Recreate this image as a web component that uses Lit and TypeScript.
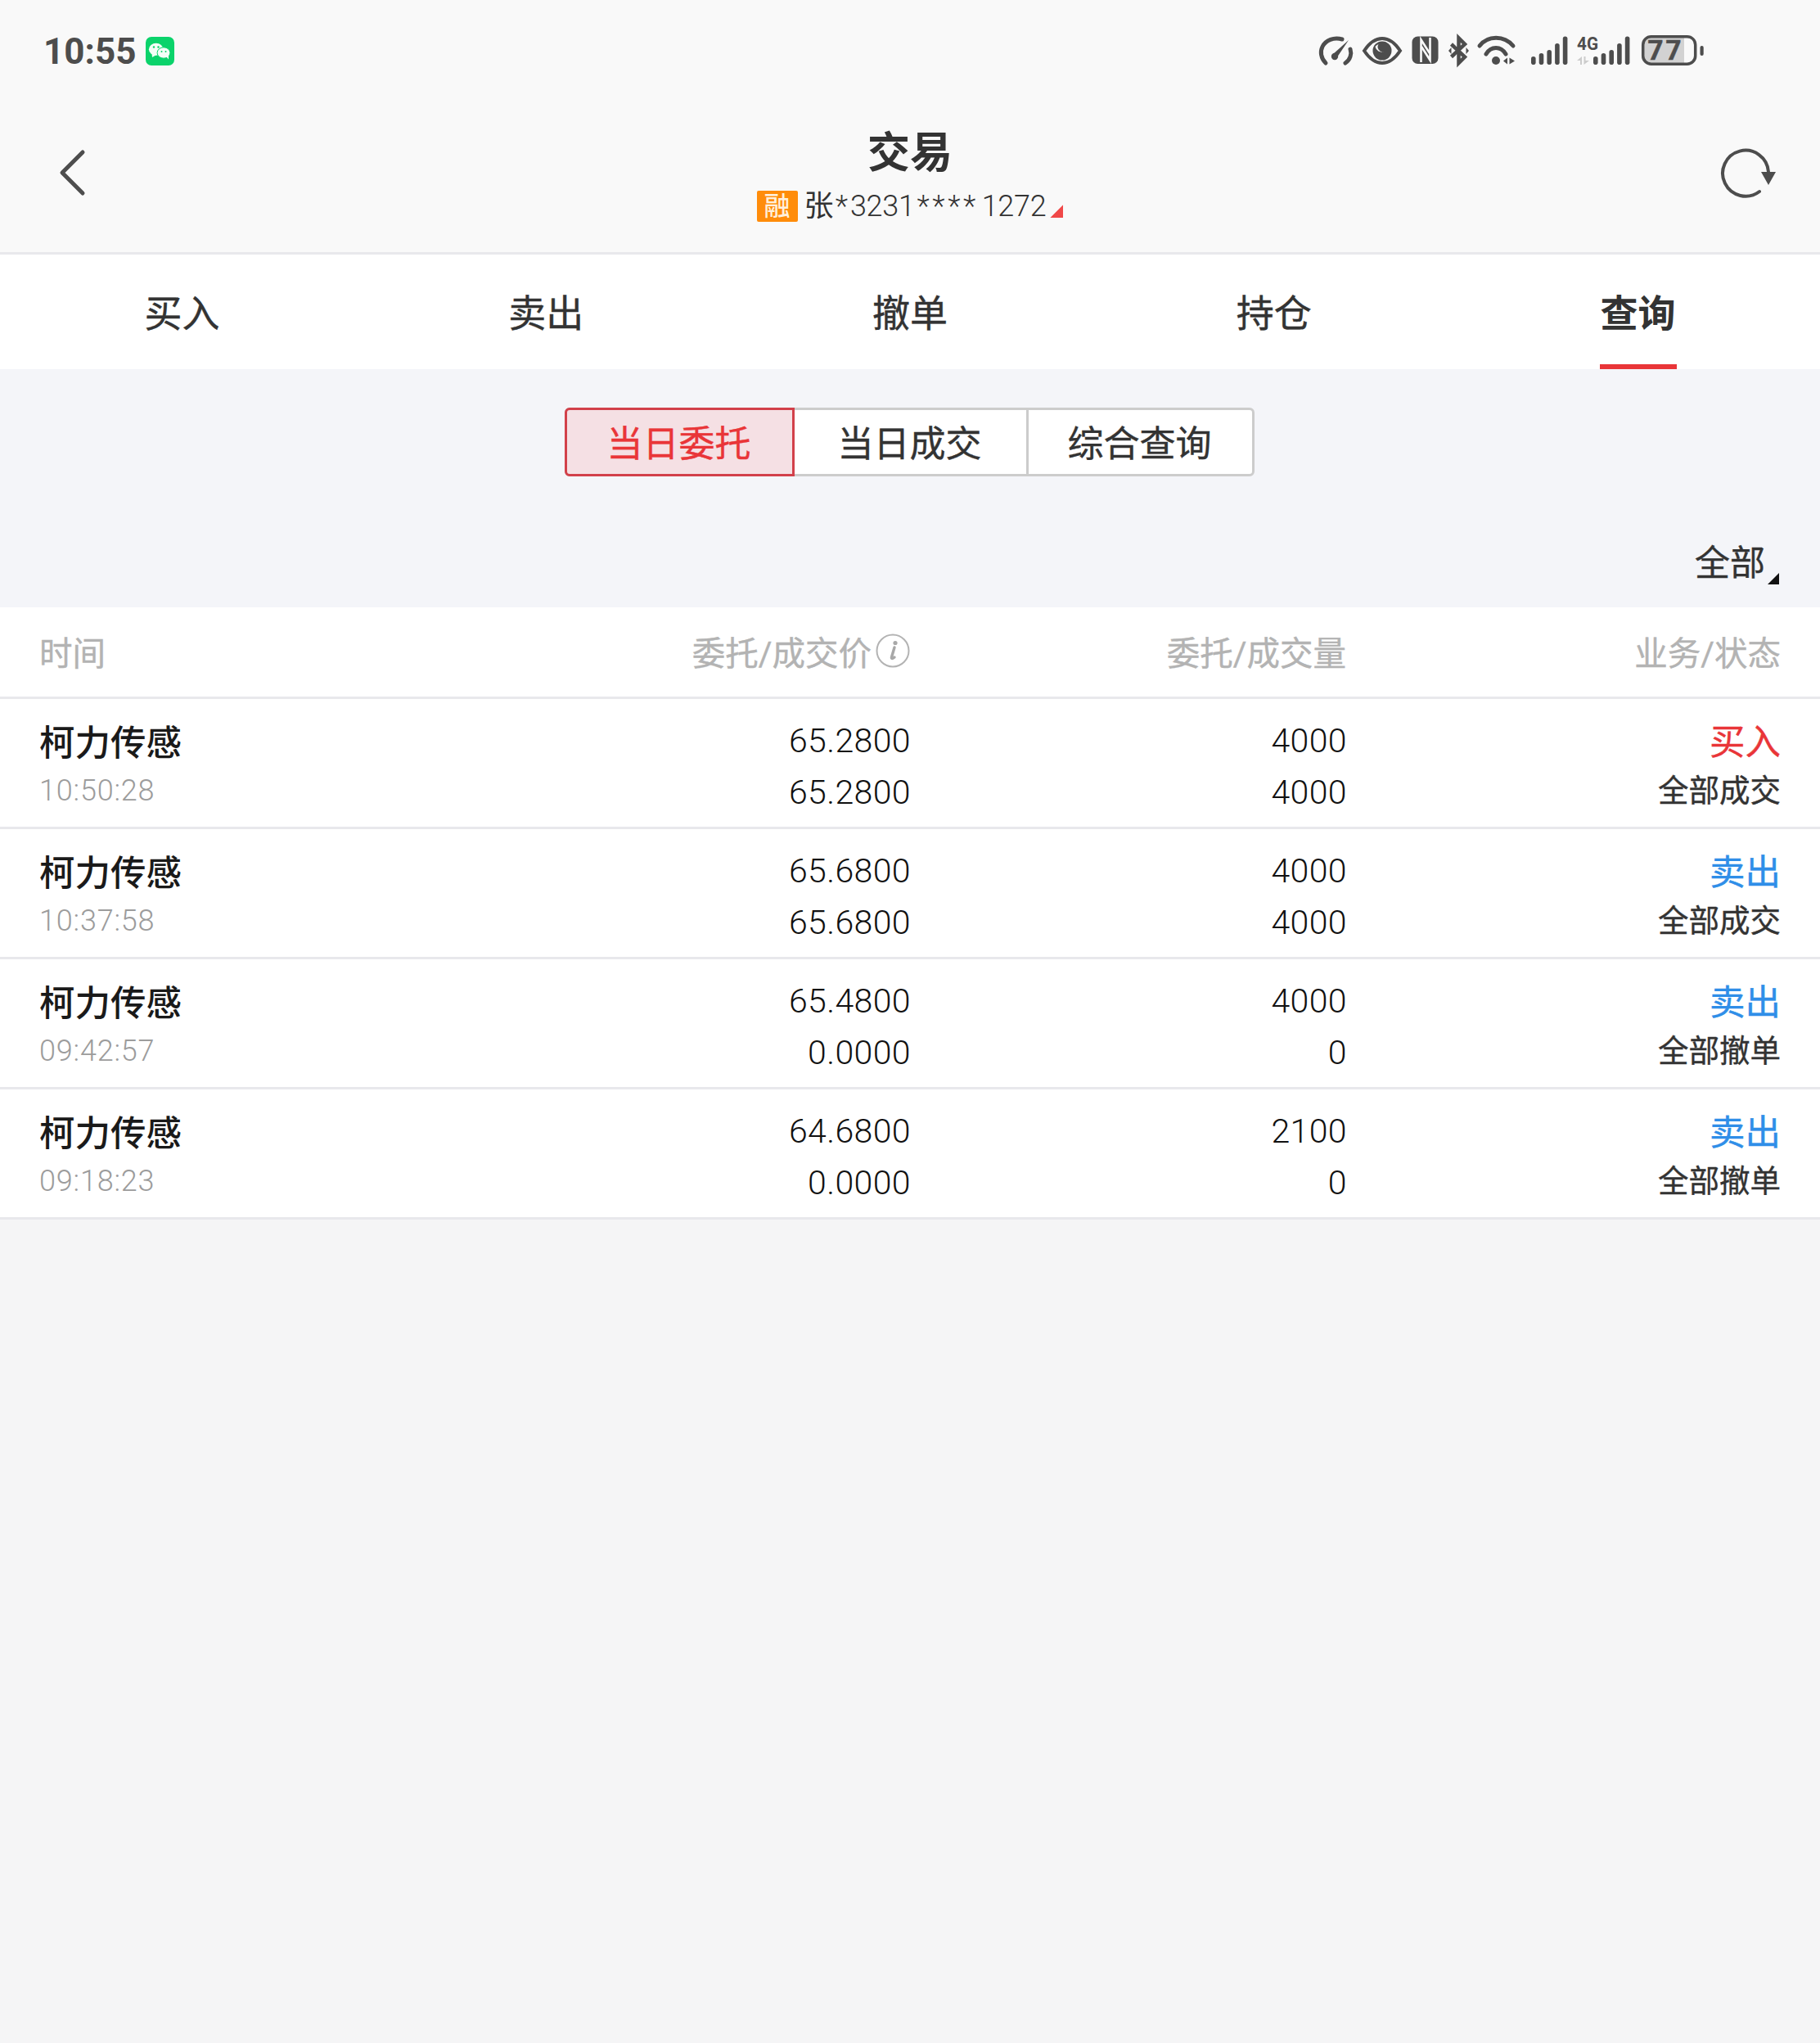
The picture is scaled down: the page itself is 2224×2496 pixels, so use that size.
import {LitElement, html, css} from 'lit';
import {customElement} from 'lit/decorators.js';
import {classMap} from 'lit/directives/class-map.js';

const rows = [
  {time: '10:50:28', price: '65.2800', dealPrice: '65.2800', qty: '4000', dealQty: '4000', side: '买入', status: '全部成交'},
  {time: '10:37:58', price: '65.6800', dealPrice: '65.6800', qty: '4000', dealQty: '4000', side: '卖出', status: '全部成交'},
  {time: '09:42:57', price: '65.4800', dealPrice: '0.0000', qty: '4000', dealQty: '0', side: '卖出', status: '全部撤单'},
  {time: '09:18:23', price: '64.6800', dealPrice: '0.0000', qty: '2100', dealQty: '0', side: '卖出', status: '全部撤单'},
];

const tabs = ['买入', '卖出', '撤单', '持仓', '查询'];
const segments = ['当日委托', '当日成交', '综合查询'];

@customElement('app-root')
export class AppRoot extends LitElement {
  static styles = css`
    :host {
      display: block;
      min-height: 2496px;
      background: #f5f5f6;
      font-family: "Roboto", "Noto Sans CJK SC", sans-serif;
      color: #333;
    }
    .top {
      background: #f9f9f9;
      border-bottom: 3px solid #e8e8ec;
    }
    .status {
      height: 126px;
      display: flex;
      align-items: center;
      justify-content: space-between;
      padding: 0 142px 0 53px;
      box-sizing: border-box;
    }
    .status-left {
      display: flex;
      align-items: center;
      gap: 12px;
    }
    .status-left svg {
      margin-top: -2px;
    }
    .clock {
      font-size: 44px;
      font-weight: 700;
      color: #4d4d4d;
    }
    .status-icons {
      display: flex;
      align-items: center;
      color: #4d4d4d;
    }
    .status-icons svg {
      display: block;
      overflow: visible;
    }
    .ml-10 { margin-left: 10px; }
    .ml-12 { margin-left: 12px; }
    .ml-14 { margin-left: 14px; }
    .ml-20 { margin-left: 20px; }
    .nav {
      height: 182px;
      box-sizing: border-box;
      display: grid;
      grid-template-columns: 1fr auto 1fr;
      align-items: center;
      padding: 0 52px 12px;
    }
    .back {
      margin-left: 18px;
    }
    .refresh {
      justify-self: end;
    }
    .nav svg {
      display: block;
    }
    .title-block {
      align-self: start;
      display: flex;
      flex-direction: column;
      align-items: center;
      gap: 12px;
      margin-top: 32px;
    }
    .title {
      font-size: 52px;
      font-weight: 700;
      line-height: 60px;
      color: #333;
    }
    .account {
      display: flex;
      align-items: center;
      font-size: 36px;
      font-weight: 300;
      line-height: 44px;
      color: #333;
    }
    .badge {
      width: 50px;
      height: 38px;
      background: #ff8c0a;
      color: #fff0dc;
      font-size: 32px;
      font-weight: 500;
      line-height: 38px;
      text-align: center;
      border-radius: 2px;
      margin-right: 8px;
    }
    .holder {
      font-weight: 400;
    }
    .star-one {
      letter-spacing: 2px;
      margin: 0 1px 0 2px;
    }
    .digits {
      letter-spacing: -0.3px;
    }
    .stars {
      letter-spacing: 3.5px;
      margin: 0 4px 0 3px;
    }
    .caret-red {
      width: 16px;
      height: 16px;
      background: #f04848;
      clip-path: polygon(100% 0, 100% 100%, 0 100%);
      margin: 12px 0 0 5px;
    }
    .tabs {
      display: grid;
      grid-template-columns: repeat(5, 1fr);
      height: 140px;
      background: #fff;
    }
    .tab {
      display: flex;
      justify-content: center;
    }
    .tab span {
      display: block;
      height: 134px;
      line-height: 144px;
      font-size: 46px;
      color: #333;
      border-bottom: 6px solid transparent;
      padding: 0 1px;
      -webkit-text-stroke: 0.4px #333;
    }
    .tab.active span {
      font-weight: 700;
      border-bottom-color: #e93538;
      -webkit-text-stroke: 0;
    }
    .filter {
      height: 291px;
      background: #f4f5f9;
      box-sizing: border-box;
      padding-top: 47px;
    }
    .segments {
      display: flex;
      width: 843px;
      height: 84px;
      margin-left: 690px;
      box-sizing: border-box;
      background: #fff;
      border: 3px solid #ccc;
      border-radius: 6px;
    }
    .segment {
      box-sizing: border-box;
      display: flex;
      align-items: center;
      justify-content: center;
      font-size: 44px;
      color: #333;
      padding: 0 2px 2px 0;
      -webkit-text-stroke: 0.4px currentColor;
    }
    .segment:nth-child(1) {
      width: 281px;
      margin: -3px 0 -3px -3px;
      border: 3px solid #d2404a;
      border-radius: 6px 0 0 6px;
      background: #f5e0e4;
      color: #e93538;
    }
    .segment:nth-child(2) {
      width: 286px;
      border-right: 3px solid #ccc;
    }
    .segment:nth-child(3) {
      width: 273px;
    }
    .all {
      display: flex;
      justify-content: flex-end;
      align-items: flex-end;
      padding-right: 50px;
      margin-top: 75px;
      font-size: 43px;
      line-height: 62px;
      color: #333;
      -webkit-text-stroke: 0.4px #333;
    }
    .caret-dark {
      width: 14px;
      height: 14px;
      background: #111;
      clip-path: polygon(100% 0, 100% 100%, 0 100%);
      margin: 0 0 5px 3px;
    }
    .grid-row {
      display: grid;
      grid-template-columns: 400px 664px 533px 531px;
      padding: 0 48px;
      background: #fff;
      border-bottom: 3px solid #e8e8ec;
    }
    .head {
      height: 112px;
      box-sizing: border-box;
      align-items: center;
      font-size: 40.5px;
      color: #b3b3b3;
      padding-bottom: 2px;
      -webkit-text-stroke: 0.4px #b3b3b3;
    }
    .right {
      text-align: right;
    }
    .price-head {
      display: flex;
      justify-content: flex-end;
      align-items: center;
      gap: 5px;
    }
    .price-head svg {
      display: block;
      margin-top: -1px;
    }
    .row {
      height: 159px;
      box-sizing: border-box;
      align-content: center;
      padding-top: 6px;
    }
    .cell {
      display: flex;
      flex-direction: column;
    }
    .cell div {
      height: 63.5px;
      line-height: 63.5px;
    }
    .cell .name {
      font-size: 43.5px;
      font-weight: 500;
      color: #1a1a1a;
      line-height: 73.5px;
    }
    .cell .time {
      font-size: 36px;
      font-weight: 300;
      color: #9c9c9c;
      letter-spacing: 0.8px;
      line-height: 63px;
    }
    .cell .num {
      font-size: 41px;
      font-weight: 300;
      color: #111;
      text-align: right;
      letter-spacing: 0.4px;
      line-height: 67px;
      margin-right: -1px;
    }
    .cell .side {
      font-size: 43.5px;
      text-align: right;
      line-height: 72px;
      -webkit-text-stroke: 0.4px currentColor;
    }
    .buy {
      color: #e93538;
    }
    .sell {
      color: #2f8ee8;
    }
    .state {
      font-size: 37.5px;
      color: #333;
      text-align: right;
      -webkit-text-stroke: 0.4px #333;
    }
  `;

  private renderBars(x: number) {
    const tops = [26, 22, 18, 10, 1.5];
    return tops.map((top, i) => html`
      <svg x=${x + i * 9.7} y="0" width="6" height="40" viewBox="0 0 6 40" fill="currentColor" overflow="visible">
        <rect x="0" y=${top} width="5.6" height=${36 - top} rx="2.8"/>
      </svg>
    `);
  }

  private renderStatusIcons() {
    return html`
      <div class="status-icons">
        <svg width="41" height="40" viewBox="0 0 41 40" fill="none" stroke="currentColor" stroke-width="5" stroke-linecap="round">
          <path d="M8 34 C2 28 1 20 4 14 C8 6 18 2 28 5"/>
          <path d="M38 17 C40 23 38 30 32 34"/>
          <path d="M16.5 23.5 L21.5 27.5 L36 6 Z" fill="currentColor" stroke="none"/>
          <circle cx="19" cy="26" r="4.2" fill="currentColor" stroke="none"/>
        </svg>
        <svg class="ml-12" width="48" height="40" viewBox="0 0 48 40" fill="none">
          <path d="M2 19 C10 7 17 4 24 4 C31 4 38 7 46 19 C38 31 31 34 24 34 C17 34 10 31 2 19 Z" stroke="currentColor" stroke-width="4"/>
          <circle cx="24" cy="19" r="11.5" fill="currentColor"/>
          <path d="M15.5 14 A8 8 0 0 0 26 20 A6 6 0 0 1 19.5 11 A9 9 0 0 0 15.5 14 Z" fill="#f9f9f9"/>
        </svg>
        <svg class="ml-12" width="33" height="40" viewBox="0 0 33 40" fill="none">
          <rect x="0.5" y="1.5" width="32" height="33.5" rx="7" fill="currentColor"/>
          <path d="M11.5 33 V5.5 L22 22" stroke="#f9f9f9" stroke-width="2.6"/>
          <path d="M22.5 3 V30.5 L12 14" stroke="#f9f9f9" stroke-width="2.6"/>
        </svg>
        <svg class="ml-12" width="25" height="40" viewBox="0 0 25 40" fill="none" stroke="currentColor" stroke-width="4.5">
          <path d="M3.5 11 L20 26.5 L12.5 34 V3.5 L20 11 L3.5 26.5"/>
          <path d="M21.5 15 L25 19 L21.5 23 Z M3.5 15 L0 19 L3.5 23 Z" fill="currentColor" stroke="none"/>
        </svg>
        <svg class="ml-10" width="46" height="40" viewBox="0 0 46 40" fill="none" stroke="currentColor" stroke-width="5" stroke-linecap="round">
          <path d="M3 13 C13 0 33 0 44 13"/>
          <path d="M11 23 C17 13 29 13 35 23"/>
          <circle cx="23" cy="31" r="5" fill="currentColor" stroke="none"/>
          <path d="M32 31.5 L37 27.5 V35.5 Z M39.5 27.5 V35.5 L46 31.5 Z" fill="currentColor" stroke="none"/>
        </svg>
        <svg class="ml-20" width="44" height="40" viewBox="0 0 44 40" fill="currentColor">
          ${this.renderBars(0)}
        </svg>
        <svg class="ml-12" width="65" height="40" viewBox="0 0 65 40" fill="currentColor">
          <text x="0" y="18" font-size="22" font-weight="700" textLength="26" lengthAdjust="spacingAndGlyphs">4G</text>
          <path d="M0 31 L6 26 V36 H4 V31 Z M8.5 26 H10.5 V31 H15 L8.5 36 Z" fill="#ccc"/>
          ${this.renderBars(20)}
        </svg>
        <svg class="ml-14" width="76" height="40" viewBox="0 0 76 40">
          <path d="M11 2 H52 V35 H11 A9 9 0 0 1 2 26 V11 A9 9 0 0 1 11 2 Z" fill="#d2d2d2"/>
          <rect x="1.7" y="1.7" width="64" height="33.5" rx="10" fill="none" stroke="currentColor" stroke-width="3.5"/>
          <rect x="71.5" y="13" width="4.2" height="12" rx="2" fill="currentColor"/>
          <text x="29.5" y="30" font-size="33" font-weight="700" letter-spacing="3" text-anchor="middle" fill="currentColor" stroke="currentColor" stroke-width="0.6">77</text>
        </svg>
      </div>
    `;
  }

  render() {
    return html`
      <div class="top">
        <div class="status">
          <div class="status-left">
            <span class="clock">10:55</span>
            <svg width="35" height="35" viewBox="0 0 35 35">
              <rect width="35" height="35" rx="7" fill="#0bd36b"/>
              <ellipse cx="12.7" cy="15.3" rx="8.8" ry="7.5" fill="#f4fff8"/>
              <path d="M7.5 20 L8 25 L13 22 Z" fill="#f4fff8"/>
              <ellipse cx="22" cy="19.5" rx="7.9" ry="6.7" fill="#f4fff8" stroke="#0bd36b" stroke-width="1"/>
              <path d="M25 24 L28 27.5 L28 22 Z" fill="#f4fff8"/>
              <circle cx="10" cy="12.5" r="1.2" fill="#0bd36b"/>
              <circle cx="15.5" cy="12.5" r="1.2" fill="#0bd36b"/>
              <circle cx="19.5" cy="18" r="1" fill="#0bd36b"/>
              <circle cx="24.5" cy="18" r="1" fill="#0bd36b"/>
            </svg>
          </div>
          ${this.renderStatusIcons()}
        </div>
        <div class="nav">
          <svg class="back" width="36" height="60" viewBox="0 0 36 60" fill="none" stroke="#4d4d4d" stroke-width="5" stroke-linecap="round" stroke-linejoin="round">
            <path d="M31 5 L6 30 L31 55"/>
          </svg>
          <div class="title-block">
            <div class="title">交易</div>
            <div class="account">
              <span class="badge">融</span><span class="holder">张</span><span class="star-one">*</span><span class="digits">3231</span><span class="stars">****</span><span class="digits">1272</span><span class="caret-red"></span>
            </div>
          </div>
          <svg class="refresh" width="70" height="64" viewBox="0 0 70 64" fill="none">
            <path d="M48 55 A28 28 0 1 1 59 31" stroke="#4d4d4d" stroke-width="4" stroke-linecap="round"/>
            <path d="M50 31 H68 L59 47 Z" fill="#4d4d4d"/>
          </svg>
        </div>
      </div>
      <div class="tabs">
        ${tabs.map((t, i) => html`
          <div class=${classMap({tab: true, active: i === 4})}><span>${t}</span></div>
        `)}
      </div>
      <div class="filter">
        <div class="segments">
          ${segments.map((s) => html`<div class="segment">${s}</div>`)}
        </div>
        <div class="all">全部<span class="caret-dark"></span></div>
      </div>
      <div class="grid-row head">
        <div>时间</div>
        <div class="price-head">
          委托/成交价
          <svg width="42" height="42" viewBox="0 0 42 42" fill="none">
            <circle cx="21" cy="21" r="19.5" stroke="#b3b3b3" stroke-width="2"/>
            <path d="M23 17 L19.5 29 Q19 32 23 29" stroke="#a8a8a8" stroke-width="3.4" stroke-linecap="round"/>
            <circle cx="24" cy="11.5" r="2.6" fill="#a8a8a8"/>
          </svg>
        </div>
        <div class="right">委托/成交量</div>
        <div class="right">业务/状态</div>
      </div>
      ${rows.map((r) => html`
        <div class="grid-row row">
          <div class="cell">
            <div class="name">柯力传感</div>
            <div class="time">${r.time}</div>
          </div>
          <div class="cell">
            <div class="num">${r.price}</div>
            <div class="num">${r.dealPrice}</div>
          </div>
          <div class="cell">
            <div class="num">${r.qty}</div>
            <div class="num">${r.dealQty}</div>
          </div>
          <div class="cell">
            <div class=${classMap({side: true, buy: r.side === '买入', sell: r.side === '卖出'})}>${r.side}</div>
            <div class="state">${r.status}</div>
          </div>
        </div>
      `)}
    `;
  }
}
